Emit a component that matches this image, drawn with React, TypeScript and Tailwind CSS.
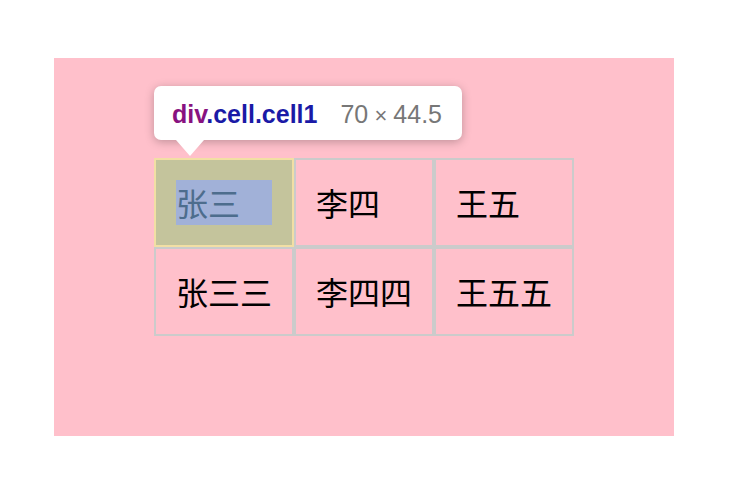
import React from "react";

const cjk = { fontFamily: '"Noto Sans CJK SC", "Noto Sans", sans-serif' };
const latin = { fontFamily: '"Liberation Sans", Arial, sans-serif' };

function Cell({ text, active }: { text: string; active?: boolean }) {
  if (active) {
    return (
      <div className="box-border h-[89px] w-[140px] border-2 border-[#f2dfa4] bg-[#c4c49c] p-[20px] pr-[20px]">
        <div
          className="h-[45px] w-[96px] bg-[#a1b1d8] text-[32px] leading-[45px] text-[#4d6d8d]"
          style={cjk}
        >
          {text}
        </div>
      </div>
    );
  }
  return (
    <div className="box-border h-[89px] w-[140px] border-2 border-[#cbcbcb] bg-[#ffc0cb] p-[20px]">
      <div className="h-[45px] w-[96px] whitespace-nowrap text-[32px] leading-[45px] text-black" style={cjk}>
        {text}
      </div>
    </div>
  );
}

export default function App() {
  return (
    <div className="h-[482px] w-[732px] bg-white pl-[54px] pt-[58px]">
      <div className="box-border h-[378px] w-[620px] bg-[#ffc0cb] pl-[100px] pt-[100px]">
        <div className="relative w-[420px]">
          <div className="grid grid-cols-[140px_140px_140px]">
            <Cell text="张三" active />
            <Cell text="李四" />
            <Cell text="王五" />
            <Cell text="张三三" />
            <Cell text="李四四" />
            <Cell text="王五五" />
          </div>
          <div className="absolute left-0 top-[-72px] box-border flex h-[54px] w-[308px] items-center gap-[23px] rounded-[7px] bg-white pl-[18px] pt-[3px] shadow-[0_2px_10px_rgba(0,0,0,0.25)]" style={latin}>
            <span className="text-[25px] font-bold leading-none">
              <span className="text-[#881280]">div</span>
              <span className="text-[#1a1aa6]">.cell.cell1</span>
            </span>
            <span className="text-[25px] leading-none text-[#777777]">70<span className="text-[22px]"> × </span>44.5</span>
            <div className="absolute left-[22px] top-[54px] h-0 w-0 border-l-[14px] border-r-[14px] border-t-[16px] border-l-transparent border-r-transparent border-t-white" />
          </div>
        </div>
      </div>
    </div>
  );
}
